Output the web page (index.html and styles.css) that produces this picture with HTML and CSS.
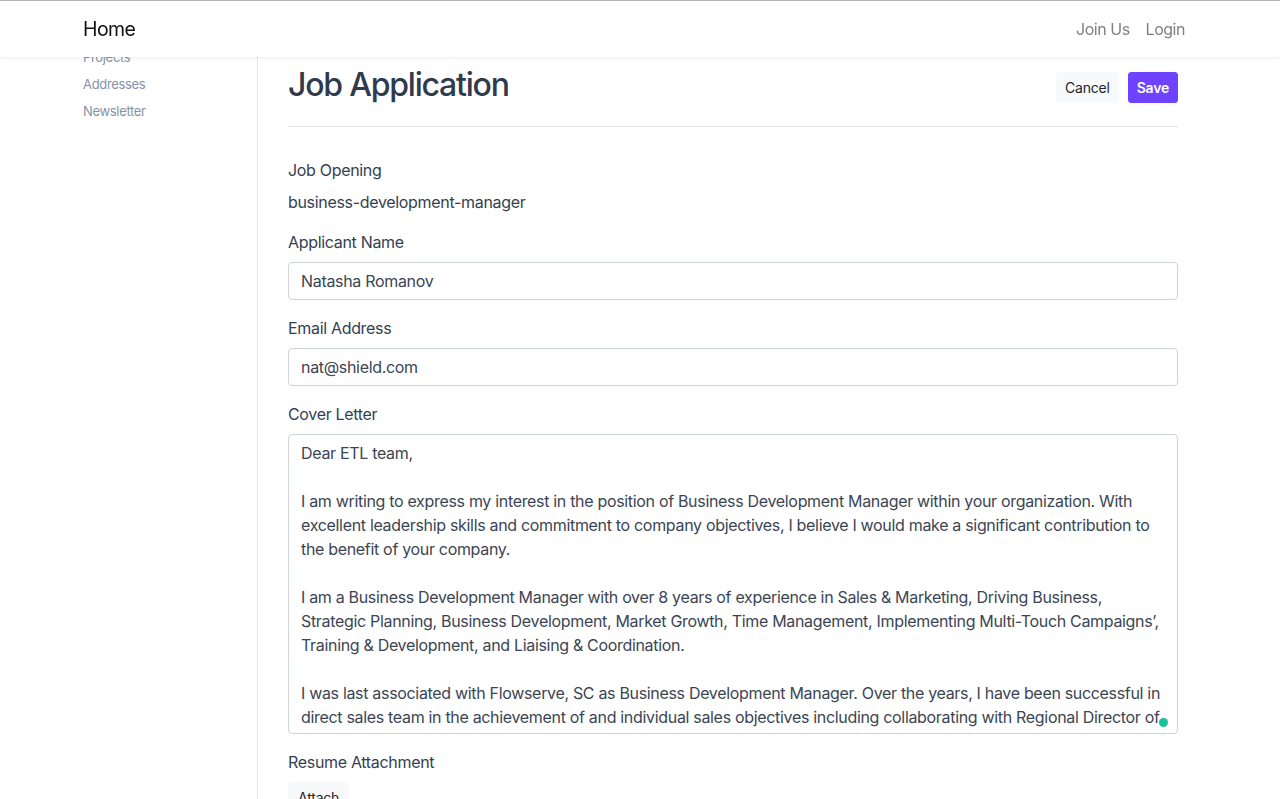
FILE: index.html
```html
<!DOCTYPE html>
<html lang="en">
<head>
<meta charset="utf-8">
<title>Job Application</title>
<link rel="stylesheet" href="styles.css">
</head>
<body>
<nav class="navbar">
  <div class="navbar-inner">
    <a class="brand" href="#">Home</a>
    <div class="nav-links">
      <a class="nav-link" href="#">Join Us</a>
      <a class="nav-link" href="#">Login</a>
    </div>
  </div>
</nav>
<div class="layout">
  <aside class="sidebar">
    <ul class="side-list">
      <li><a href="#">Projects</a></li>
      <li><a href="#">Addresses</a></li>
      <li><a href="#">Newsletter</a></li>
    </ul>
  </aside>
  <main class="main">
    <div class="page-header">
      <h1 class="title">Job Application</h1>
      <div class="actions">
        <button class="btn btn-light" type="button">Cancel</button>
        <button class="btn btn-primary" type="button">Save</button>
      </div>
    </div>
    <form class="form">
      <div class="form-group">
        <label class="label">Job Opening</label>
        <div class="static">business-development-manager</div>
      </div>
      <div class="form-group">
        <label class="label" for="name">Applicant Name</label>
        <input class="control" id="name" type="text" value="Natasha Romanov">
      </div>
      <div class="form-group">
        <label class="label" for="email">Email Address</label>
        <input class="control" id="email" type="text" value="nat@shield.com">
      </div>
      <div class="form-group">
        <label class="label" for="cover">Cover Letter</label>
        <div class="textarea-wrap">
          <textarea class="control textarea" id="cover">Dear ETL team,

I am writing to express my interest in the position of Business Development Manager within your organization. With
excellent leadership skills and commitment to company objectives, I believe I would make a significant contribution to
the benefit of your company.

I am a Business Development Manager with over 8 years of experience in Sales &amp; Marketing, Driving Business,
Strategic Planning, Business Development, Market Growth, Time Management, Implementing Multi-Touch Campaigns’,
Training &amp; Development, and Liaising &amp; Coordination.

I was last associated with Flowserve, SC as Business Development Manager. Over the years, I have been successful in
direct sales team in the achievement of and individual sales objectives including collaborating with Regional Director of
Sales to develop new business and expand existing accounts.</textarea>
          <span class="dot"></span>
        </div>
      </div>
      <div class="form-group">
        <label class="label">Resume Attachment</label>
        <div><button class="btn btn-light btn-attach" type="button">Attach</button></div>
      </div>
    </form>
  </main>
</div>
</body>
</html>
```
FILE: styles.css
```css
* { box-sizing: border-box; }
html, body { margin: 0; padding: 0; }
body {
  font-family: Inter, "Helvetica Neue", Arial, sans-serif;
  letter-spacing: -0.02em;
  color: #343f52;
  background: #fff;
  overflow: hidden;
  height: 799px;
  border-top: 1px solid #b5b5b5;
}
a { text-decoration: none; }

.navbar {
  position: fixed;
  top: 1px; left: 0; right: 0;
  height: 56px;
  background: #fff;
  box-shadow: 0 1px 4px rgba(0,0,0,0.08);
  z-index: 10;
}
.navbar-inner {
  height: 100%;
  display: flex;
  align-items: center;
  justify-content: space-between;
  padding: 0 95px 0 83px;
}
.brand { font-size: 19.5px; color: #111; letter-spacing: -0.03em; }
.nav-links { display: flex; gap: 16px; }
.nav-link { font-size: 16px; color: #808080; letter-spacing: -0.03em; }

.layout { display: flex; height: 798px; }
.sidebar {
  width: 258px;
  flex: none;
  border-right: 1px solid #e6e6e6;
  padding: 45px 0 0 83px;
}
.side-list { list-style: none; margin: 0; padding: 0; }
.side-list li { height: 27px; line-height: 20px; }
.side-list a { font-size: 13px; color: #8592a6; letter-spacing: -0.025em; }

.main { flex: 1; padding: 65px 102px 0 30px; }
.page-header {
  display: flex;
  justify-content: space-between;
  align-items: flex-start;
  padding-bottom: 14px;
  border-bottom: 1px solid #e3e3e3;
  margin-bottom: 31px;
}
.title {
  margin: 0 0 8px;
  font-size: 32px;
  line-height: 1.2;
  font-weight: 500;
  letter-spacing: -0.038em;
  color: #2f3b4c;
}
.actions { display: flex; gap: 9px; margin-top: 6px; }
.btn {
  font-family: inherit;
  letter-spacing: -0.015em;
  font-size: 14px;
  line-height: 21px;
  padding: 4px 8px;
  border: 1px solid transparent;
  border-radius: 3px;
  cursor: pointer;
}
.btn-light { background: #f8f9fa; color: #212529; border-color: #f8f9fa; }
.btn-primary { background: #6d43ff; color: #fff; border-color: #6d43ff; font-weight: 600; }
.btn-attach { padding: 4px 9px; }

.form-group { margin-bottom: 16px; }
.label { display: block; font-size: 16px; line-height: 24px; margin-bottom: 8px; color: #343f52; }
.static { font-size: 16px; line-height: 24px; color: #343f52; }
.control {
  display: block;
  width: 100%;
  font-family: inherit;
  letter-spacing: -0.02em;
  font-size: 16px;
  line-height: 24px;
  padding: 6px 12px;
  border: 1px solid #ced4da;
  border-radius: 4px;
  color: #3b4554;
  background: #fff;
}
.textarea-wrap { position: relative; }
.textarea {
  height: 300px;
  resize: none;
  overflow: hidden;
  white-space: pre;
}
.dot {
  position: absolute;
  right: 10px;
  bottom: 7px;
  width: 9px;
  height: 9px;
  border-radius: 50%;
  background: #15c39a;
}
```
